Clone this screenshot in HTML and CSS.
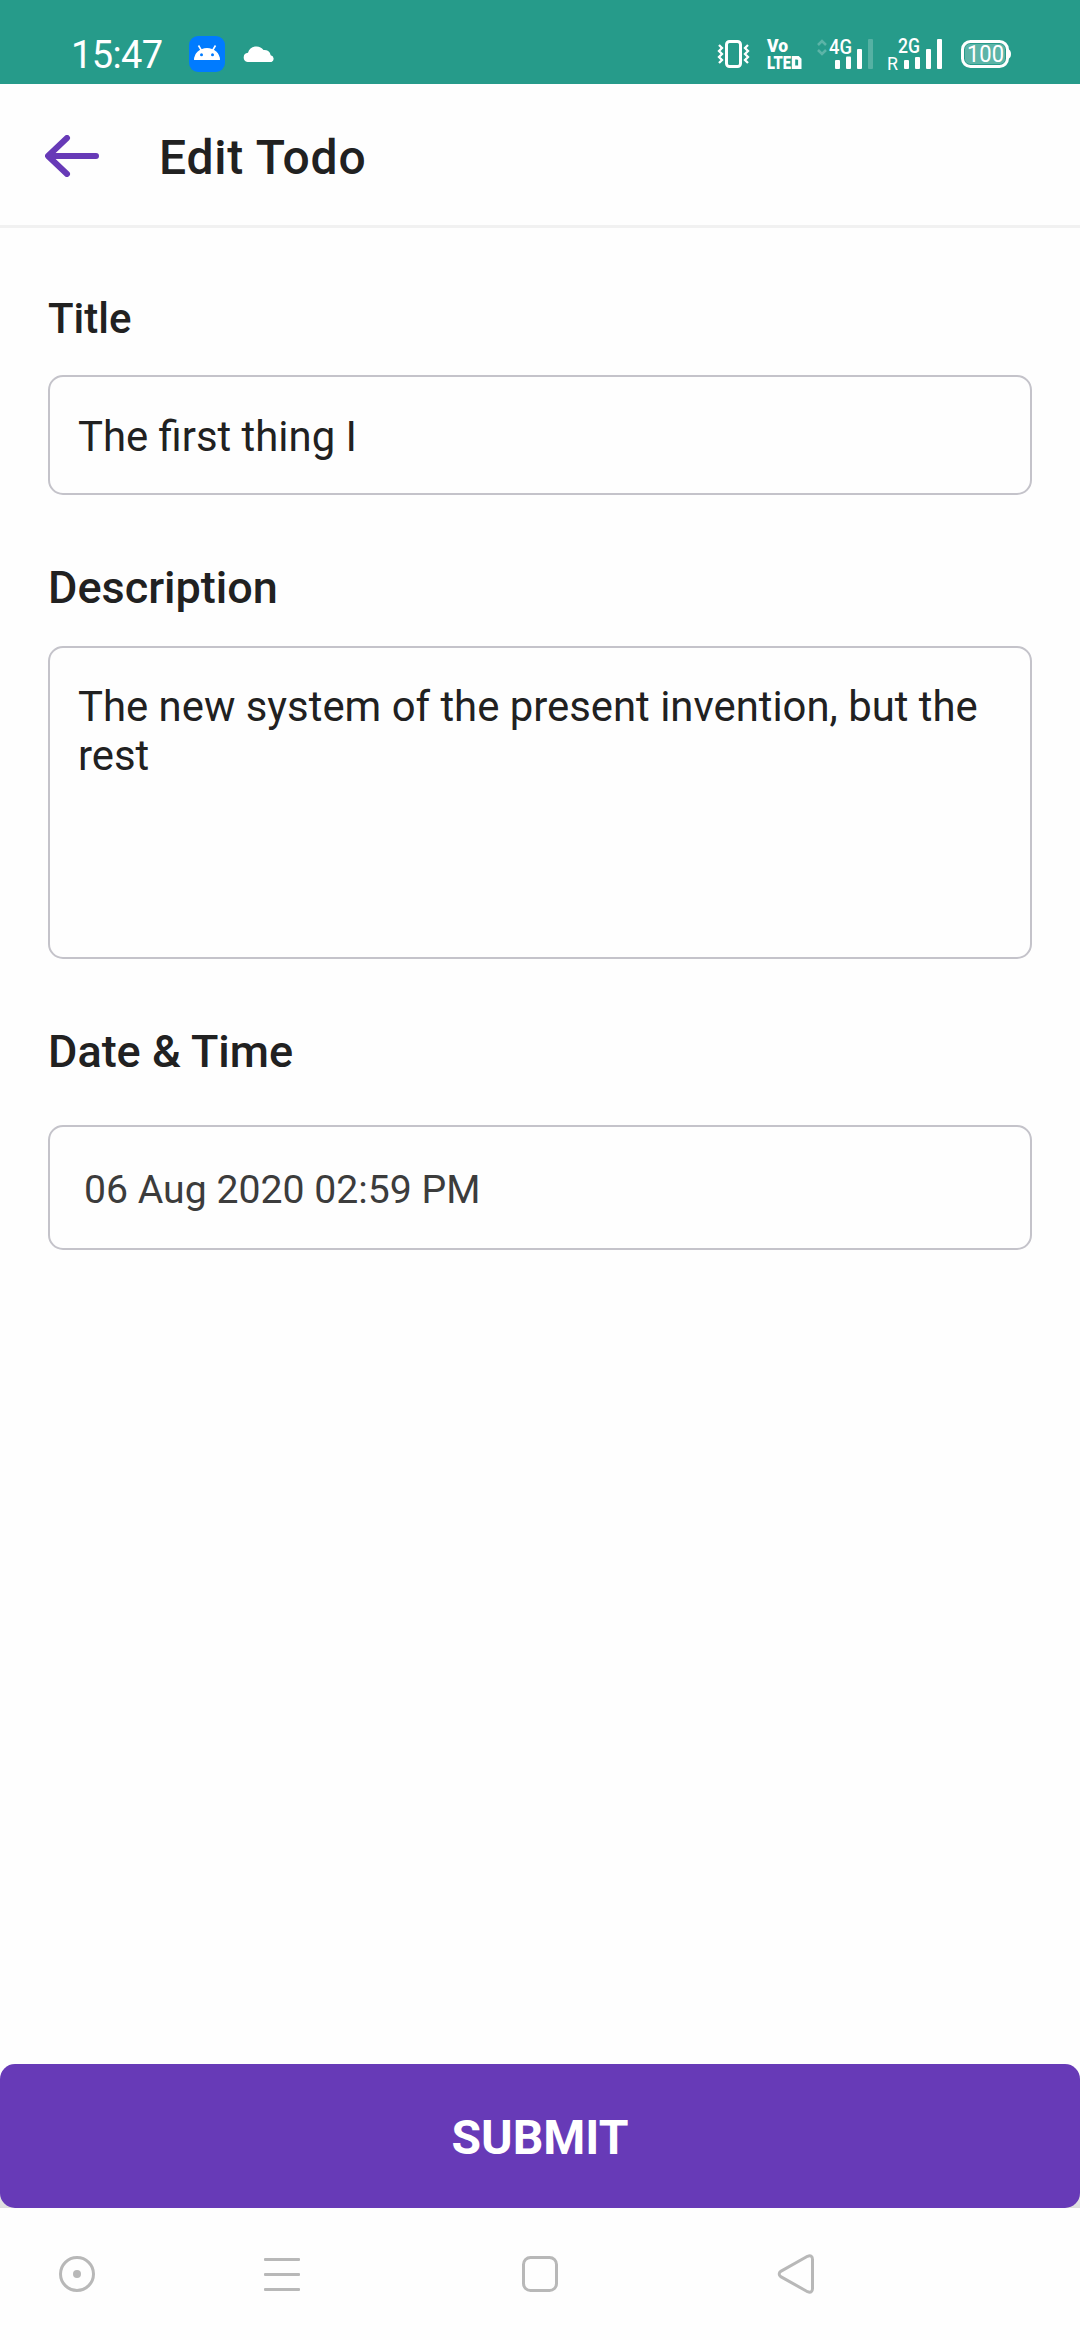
FILE: index.html
```html
<!DOCTYPE html>
<html lang="en">
<head>
<meta charset="utf-8">
<title>Edit Todo</title>
<link rel="stylesheet" href="styles.css">
</head>
<body>
<div class="screen">
  <div class="status-bar">
    <span class="clock">15:47</span>
    <svg class="app-icon" width="36" height="36" viewBox="0 0 36 36">
      <rect width="36" height="36" rx="9" fill="#007bff"/>
      <path d="M9.500 9.500l3 5M26.500 9.500l-3 5" stroke="#fff" stroke-width="1.600"/>
      <path d="M5 24a13 12 0 0 1 26 0z" fill="#fff"/>
      <circle cx="12.500" cy="18.700" r="1.500" fill="#007bff"/>
      <circle cx="23.500" cy="18.700" r="1.500" fill="#007bff"/>
    </svg>
    <svg class="cloud-icon" width="32" height="18" viewBox="0 0 32 18">
      <path d="M4.500 18a4.700 4.700 0 0 1 .5-9.300A8.800 8.800 0 0 1 20.500 6a6.300 6.300 0 0 1 7.200 5.200A3.600 3.600 0 0 1 28.500 18z" fill="#fff"/>
    </svg>
    <div class="indicators">
      <svg class="vibrate" width="31" height="30" viewBox="0 0 31 30">
        <rect x="8.500" y="2.500" width="14" height="25" rx="3" fill="none" stroke="#fff" stroke-width="3"/>
        <path d="M1 6l3 3-3 3 3 3-3 3 3 3-3 3M30 6l-3 3 3 3-3 3 3 3-3 3 3 3" fill="none" stroke="#fff" stroke-width="2.300"/>
      </svg>
      <svg class="volte" width="36" height="30" viewBox="0 0 36 30">
        <g fill="#fff" class="volte-text">
          <text x="0" y="13" textLength="21" lengthAdjust="spacingAndGlyphs">Vo</text>
          <text x="0" y="30" textLength="24" lengthAdjust="spacingAndGlyphs">LTE</text>
        </g>
        <path d="M26.500 18.700H31l1.800 1.800v7.800h-6.300z" fill="none" stroke="#fff" stroke-width="3.400"/>
      </svg>
      <svg class="signal-one" width="57" height="31" viewBox="0 0 57 31">
        <path d="M1 6l4-4 4 4M1 11l4 4 4-4" fill="none" stroke="#fff" stroke-opacity=".25" stroke-width="2.500"/>
        <text class="net" x="12" y="14.500" textLength="23" lengthAdjust="spacingAndGlyphs">4G</text>
        <g fill="#fff"><rect x="18" y="21" width="5" height="9" rx="1"/><rect x="29" y="17.500" width="5" height="12.500" rx="1"/><rect x="40" y="10" width="5" height="20" rx="1"/><rect x="51" y="0" width="5" height="30" rx="1" fill-opacity=".22"/></g>
      </svg>
      <svg class="signal-two" width="55" height="31" viewBox="0 0 55 31">
        <text class="net" x="10" y="14" textLength="22" lengthAdjust="spacingAndGlyphs">2G</text>
        <text class="roam" x="-1" y="30.500" textLength="11" lengthAdjust="spacingAndGlyphs">R</text>
        <g fill="#fff"><rect x="16" y="21" width="5" height="9" rx="1"/><rect x="27" y="18" width="5" height="12" rx="1"/><rect x="38" y="10" width="5" height="20" rx="1"/><rect x="49" y="0" width="5" height="30" rx="1"/></g>
      </svg>
      <svg class="battery" width="50" height="28" viewBox="0 0 50 28">
        <rect x="1.500" y="1.500" width="45" height="25" rx="8" fill="none" stroke="#fff" stroke-width="3"/>
        <rect x="4" y="4" width="40" height="20" rx="5" fill="#fff" fill-opacity=".25"/>
        <path d="M47 9q3 1 3 5t-3 5z" fill="#fff"/>
        <text class="level" x="6" y="22" textLength="37" lengthAdjust="spacingAndGlyphs">100</text>
      </svg>
    </div>
  </div>

  <header class="header">
    <svg class="back" width="54" height="42" viewBox="0 0 54 42">
      <path d="M22 3L3 21l19 18M3.500 21H51" fill="none" stroke="#673ab7" stroke-width="6" stroke-linecap="round" stroke-linejoin="round"/>
    </svg>
    <h1 class="heading">Edit Todo</h1>
  </header>

  <main class="form">
    <label class="label label-title">Title</label>
    <div class="field field-title">The first thing I</div>
    <label class="label label-description">Description</label>
    <div class="field field-description">The new system of the present invention, but the rest</div>
    <label class="label label-date">Date &amp; Time</label>
    <div class="field field-date">06 Aug 2020 02:59 PM</div>
  </main>

  <div class="submit-wrap"><button class="submit">SUBMIT</button></div>

  <nav class="nav-bar">
    <svg width="36" height="36" viewBox="0 0 36 36"><circle cx="18" cy="18" r="16.500" fill="none" stroke="#b8b8b8" stroke-width="3"/><circle cx="18" cy="18" r="4" fill="#b8b8b8"/></svg>
    <svg class="nav-menu" width="36" height="36" viewBox="0 0 36 36" fill="#b8b8b8"><rect y="2" width="36" height="3" rx="1"/><rect y="17" width="36" height="3" rx="1"/><rect y="32" width="36" height="3" rx="1"/></svg>
    <svg class="nav-home" width="36" height="36" viewBox="0 0 36 36"><rect x="1.500" y="1.500" width="33" height="33" rx="7" fill="none" stroke="#b8b8b8" stroke-width="3"/></svg>
    <svg class="nav-back" width="38" height="40" viewBox="0 0 38 40"><path d="M30.500 2.300L3.700 17.400a3 3 0 0 0 0 5.200L30.500 37.700Q35.500 39.500 35.500 34.500V5.500Q35.500.5 30.500 2.300z" fill="none" stroke="#b8b8b8" stroke-width="3"/></svg>
  </nav>
</div>
</body>
</html>
```

FILE: styles.css
```css
* { box-sizing: border-box; }
body { margin: 0; background: #fefefe; font-family: Roboto, sans-serif; color: #212121; }
.screen { width: 1080px; height: 2340px; display: flex; flex-direction: column; overflow: hidden; }

.status-bar { height: 84px; flex: none; background: #269b8a; display: flex; align-items: flex-start; }
.clock { margin: 33px 0 0 71px; width: 118px; font-size: 38px; line-height: 44px; color: #fff; letter-spacing: -0.6px; }
.app-icon { margin-top: 36px; }
.cloud-icon { margin: 44px 0 0 18px; }
.indicators { margin: 39px 0 0 443px; display: flex; align-items: flex-start; }
.indicators svg { overflow: visible; }
.volte { margin-left: 18px; }
.volte-text { font-size: 18px; font-weight: 900; }
.signal-one { margin-left: 14px; }
.signal-two { margin-left: 14px; }
.battery { margin: 1px 0 0 18px; }
.net, .roam, .level { fill: #fff; }
.net { font-size: 20px; font-weight: 500; }
.roam { font-size: 18px; }
.level { font-size: 23px; }

.header { height: 144px; flex: none; border-bottom: 3px solid #f1f1f1; display: flex; align-items: center; }
.back { margin: 3px 0 0 45px; }
.heading { margin: 6px 0 0 60px; font-size: 48px; line-height: 56px; font-weight: 500; letter-spacing: 0.8px; }

.form { flex: 1; padding: 0 48px; display: flex; flex-direction: column; }
.label { display: block; font-weight: 500; font-size: 45px; line-height: 52px; }
.label-title { margin-top: 65px; font-size: 42px; }
.field { border: 2px solid #c4c3ca; border-radius: 15px; font-size: 41.85px; line-height: 49px; padding: 0 28px; }
.field-title { margin-top: 30px; height: 120px; padding-top: 35px; }
.label-description { margin-top: 67px; }
.field-description { margin-top: 32px; height: 313px; padding-top: 34px; }
.label-date { margin-top: 67px; }
.field-date { margin-top: 47px; height: 125px; padding: 40px 34px 0; font-size: 39.2px; line-height: 46px; color: #3c3c3c; }

.submit-wrap { height: 144px; flex: none; background: linear-gradient(#fefefe 60%, #dedede); }
.submit { display: block; width: 100%; height: 144px; padding: 4px 0 0; border: 0; border-radius: 15px; background: #673ab7; color: #fff; font: 700 48px/56px Roboto, sans-serif; }

.nav-bar { height: 132px; flex: none; background: #fefefe; display: flex; align-items: center; padding-left: 59px; }
.nav-menu { margin-left: 169px; }
.nav-home { margin-left: 222px; }
.nav-back { margin-left: 219px; }
```
